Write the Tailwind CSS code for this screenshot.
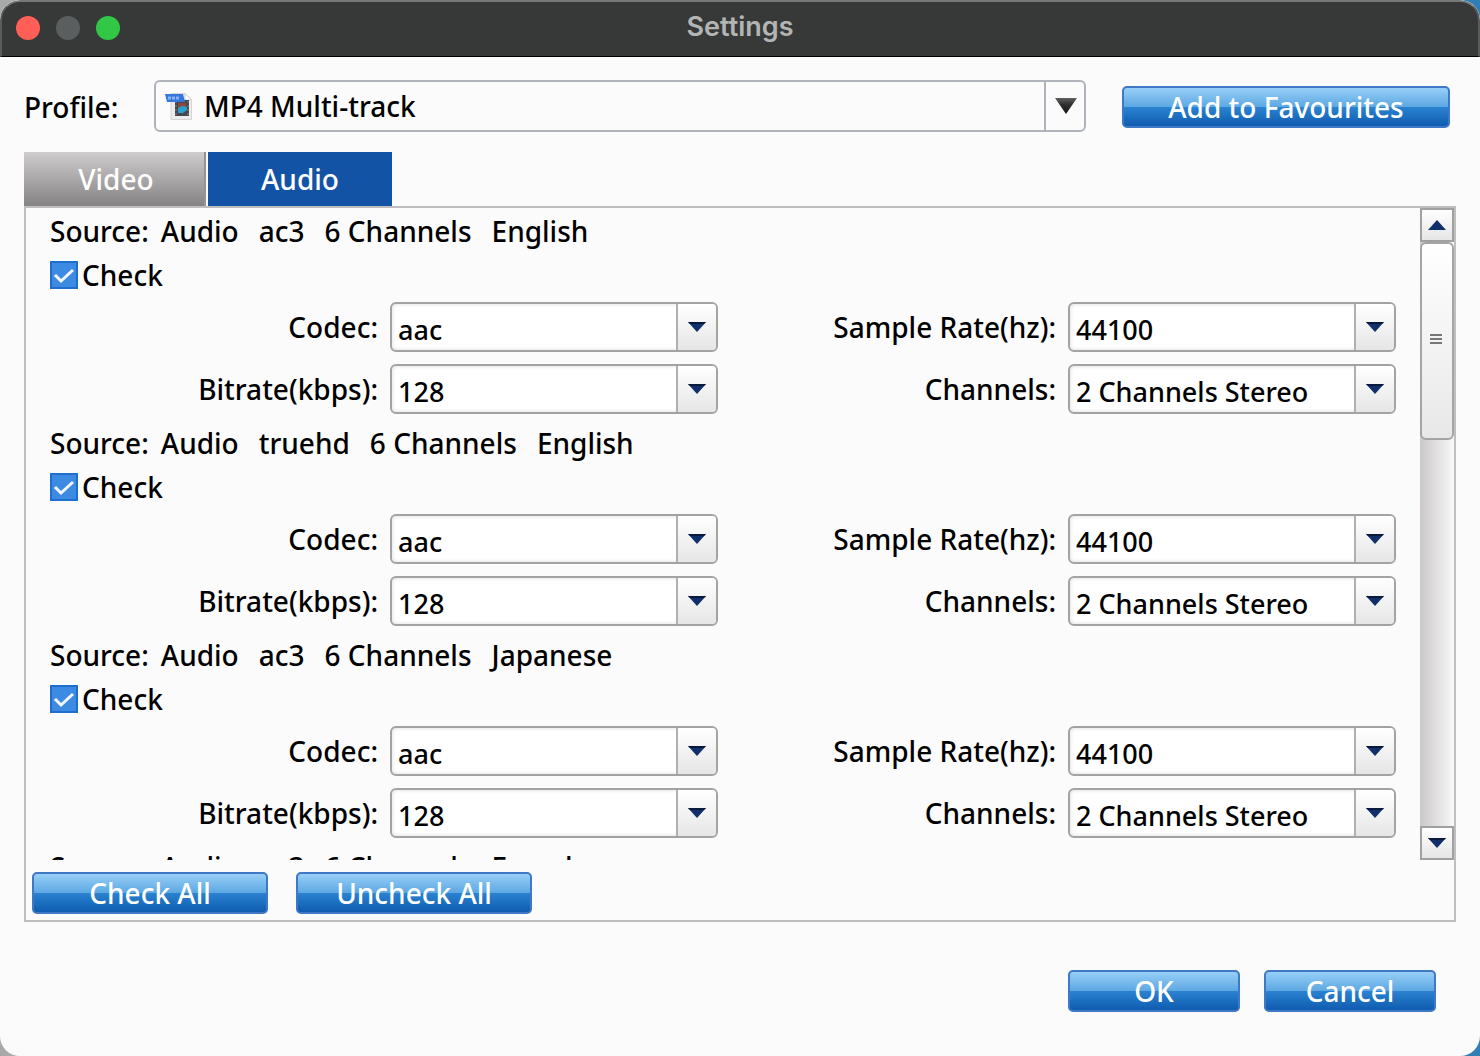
<!DOCTYPE html>
<html lang="en">
<head>
<meta charset="utf-8">
<meta name="viewport" content="width=device-width, initial-scale=1">
<title>Settings</title>
<script src="https://cdn.jsdelivr.net/npm/@tailwindcss/browser@4"></script>
</head>
<body class="bg-[linear-gradient(to_right,#a9a9a9,#a9a9a9_50%,#2f7fb5_50%)] font-['Noto_Sans',sans-serif] text-[28px] font-medium text-black">
<div class="flex h-screen flex-col overflow-hidden rounded-[20px] bg-[#fbfbfb]">
  <header class="relative flex h-[57px] shrink-0 items-center justify-center rounded-t-[20px] border-x-2 border-t-2 border-b border-x-[#5b5d5d] border-t-[#757878] border-b-black bg-[#373939] pb-0.5">
    <div class="absolute left-3.5 flex gap-4">
      <button aria-label="Close" class="size-6 rounded-full bg-[#ff5f57]"></button>
      <button aria-label="Minimise" class="size-6 rounded-full bg-[#5b5e5f]"></button>
      <button aria-label="Zoom" class="size-6 rounded-full bg-[#33c748]"></button>
    </div>
    <h1 class="pb-0.5 font-['Inter',sans-serif] text-[27px] leading-8 font-semibold text-[#b3b5b5]">Settings</h1>
  </header>

  <main class="flex min-h-0 flex-1 flex-col px-6 pt-[23px] pb-11">
    <div class="flex items-center pr-1.5">
      <label for="profile" class="w-[130px] pt-0.5">Profile:</label>
      <div class="relative flex-1">
        <select id="profile" class="block h-[52px] w-full appearance-none rounded-md border-2 border-[#aeb4b9] bg-[#fbfbfb] pl-12"><option>MP4 Multi-track</option></select>
        <svg class="pointer-events-none absolute top-3 left-2.5" width="30" height="30" viewBox="0 0 30 30">
          <path d="M7 1.500h14l6.500 6.500v19.500H7z" fill="#ececec" stroke="#d4d4d4"/>
          <path d="M21 1.500V8h6.500z" fill="#fff" stroke="#cfcfcf"/>
          <rect x="11" y="8" width="14" height="16" fill="#45474c"/>
          <path d="M12 9v14M24 9v14" stroke="#85888d" stroke-dasharray="2 2"/>
          <rect x="14" y="11" width="8" height="5" fill="#8b4a3e"/>
          <path d="M14 16l4-2 5 1v3l-4 3h-5z" fill="#2b9fd0"/>
          <path d="M1 2h18l2 8H3z" fill="#3478dc"/>
          <path d="M4 6h12" stroke="#86b4f5" stroke-width="3" stroke-dasharray="3 1"/>
        </svg>
        <div class="pointer-events-none absolute inset-y-0 right-0 flex w-[42px] items-center justify-center border-l-2 border-[#aeb4b9]">
          <svg width="22" height="16" viewBox="0 0 22 16"><defs><linearGradient id="dk" x2="0" y2="1"><stop stop-color="#606060"/><stop offset=".4" stop-color="#303030"/><stop offset="1" stop-color="#111"/></linearGradient></defs><path d="M0 0h22L11 16z" fill="url(#dk)"/></svg>
        </div>
      </div>
      <button class="mt-0.5 ml-9 h-[42px] w-[328px] rounded-[5px] border-2 border-[#3f78c4] bg-linear-[to_bottom,#97cff7,#5da8e3_49%,#2a82cf_51%,#0f5cb0] leading-8 text-white">Add to Favourites</button>
    </div>

    <div role="tablist" class="mt-5 flex h-[54px] shrink-0 gap-0.5">
      <button role="tab" class="w-[182px] border-r-2 border-[#9c9391] bg-linear-to-b from-[#cfcdce] to-[#868384] pl-1 text-white">Video</button>
      <button role="tab" aria-selected="true" class="w-[184px] bg-[#1353a6] text-white">Audio</button>
    </div>

    <section class="flex min-h-0 flex-1 flex-col border-2 border-[#bfbfbf]">
      <div class="flex min-h-0 flex-1">
        <div id="tracks" class="min-w-0 flex-1 overflow-hidden"></div>
        <div class="flex w-[34px] flex-col bg-linear-to-r from-[#ccc8ca] to-[#f8f8f8]">
          <button aria-label="Scroll up" class="flex h-[34px] items-center justify-center border-2 border-[#a0a0a0] bg-linear-to-b from-white to-[#e6e6e6]"><svg width="18" height="10" viewBox="0 0 18 10"><path d="M9 0L18 10H0z" fill="#102f6b"/></svg></button>
          <div class="flex h-[198px] flex-col items-center justify-center gap-0.5 rounded-md border-2 border-[#a5a5a5] bg-linear-to-b from-white to-[#e8e8e8] pr-0.5 pb-1">
            <i class="h-0.5 w-3 bg-[#777]"></i><i class="h-0.5 w-3 bg-[#777]"></i><i class="h-0.5 w-3 bg-[#777]"></i>
          </div>
          <div class="flex-1"></div>
          <button aria-label="Scroll down" class="flex h-[34px] items-center justify-center border-2 border-[#a0a0a0] bg-linear-to-b from-white to-[#e6e6e6]"><svg width="18" height="10" viewBox="0 0 18 10"><path d="M0 0h18L9 10z" fill="#102f6b"/><path d="M0 0h18l-2 2H2z" fill="#081a3c"/></svg></button>
        </div>
      </div>
      <div class="flex shrink-0 gap-7 px-1.5 pt-3 pb-1.5">
        <button class="h-[42px] w-[236px] rounded-[5px] border-2 border-[#3f78c4] bg-linear-[to_bottom,#97cff7,#5da8e3_49%,#2a82cf_51%,#0f5cb0] leading-8 text-white">Check All</button>
        <button class="h-[42px] w-[236px] rounded-[5px] border-2 border-[#3f78c4] bg-linear-[to_bottom,#97cff7,#5da8e3_49%,#2a82cf_51%,#0f5cb0] leading-8 text-white">Uncheck All</button>
      </div>
    </section>

    <footer class="mt-12 flex shrink-0 justify-end gap-6 pr-5">
      <button class="h-[42px] w-[172px] rounded-[5px] border-2 border-[#3f78c4] bg-linear-[to_bottom,#97cff7,#5da8e3_49%,#2a82cf_51%,#0f5cb0] leading-8 text-white">OK</button>
      <button class="h-[42px] w-[172px] rounded-[5px] border-2 border-[#3f78c4] bg-linear-[to_bottom,#97cff7,#5da8e3_49%,#2a82cf_51%,#0f5cb0] leading-8 text-white">Cancel</button>
    </footer>
  </main>
</div>
<script>
const field = (id, label, value) => `
  <div class="grid grid-cols-[1fr_328px] items-center gap-3">
    <label for="${id}" class="text-right leading-[50px]">${label}:</label>
    <div class="relative">
      <select id="${id}" class="block h-[50px] w-full appearance-none rounded-md border-2 border-[#a3a3a3] bg-white pt-1.5 pl-1.5 text-[27px] shadow-[inset_0_0_4px_#00000026]"><option>${value}</option></select>
      <div class="pointer-events-none absolute inset-y-0.5 right-0.5 flex w-10 items-center justify-center rounded-r-sm border-l-2 border-[#b0b0b0] bg-linear-to-b from-white to-[#e6e6e6]">
        <svg width="18" height="10" viewBox="0 0 18 10"><path d="M0 0h18L9 10z" fill="#102f6b"/><path d="M0 0h18l-2 2H2z" fill="#081a3c"/></svg>
      </div>
    </div>
  </div>`;
const tracks = [['ac3', 'English'], ['truehd', 'English'], ['ac3', 'Japanese'], ['ac3', 'French']];
document.getElementById('tracks').innerHTML = tracks.map(([codec, lang], i) => `
  <div class="pt-px pb-1.5">
    <p class="flex gap-5 pl-6 leading-[44px] whitespace-nowrap"><span class="flex gap-3"><span>Source:</span><span>Audio</span></span><span>${codec}</span><span>6 Channels</span><span>${lang}</span></p>
    <div class="flex h-11 items-center gap-1 pl-6">
      <span class="relative size-7">
        <input id="check${i}" type="checkbox" checked class="block size-7 appearance-none border-2 border-[#1f6fd0] bg-[#3d8ae2]">
        <svg class="pointer-events-none absolute inset-0" width="28" height="28" viewBox="0 0 28 28"><path d="M5 14l6 6L23 9" fill="none" stroke="#f4f8fd" stroke-width="3"/></svg>
      </span>
      <label for="check${i}">Check</label>
    </div>
    <div class="grid grid-cols-2 gap-y-3 pt-[5px] pr-6 pl-3.5">
      ${field('codec' + i, 'Codec', 'aac')}${field('rate' + i, 'Sample Rate(hz)', '44100')}
      ${field('bitrate' + i, 'Bitrate(kbps)', '128')}${field('channels' + i, 'Channels', '2 Channels Stereo')}
    </div>
  </div>`).join('');
</script>
</body>
</html>
